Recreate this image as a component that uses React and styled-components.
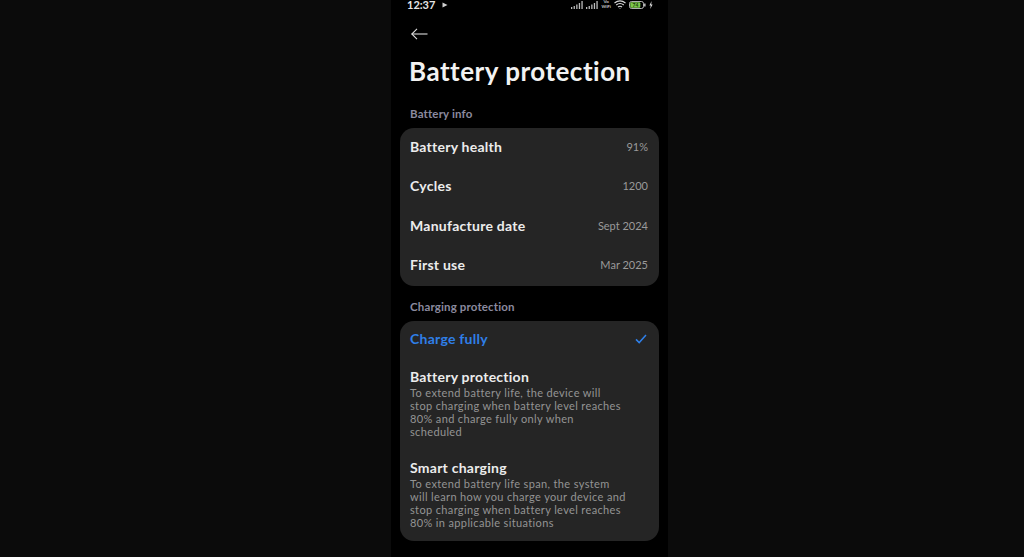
import React from 'react';
import styled, { createGlobalStyle } from 'styled-components';

const Global = createGlobalStyle`
  html, body { margin: 0; padding: 0; background: #0b0b0b; }
  body { width: 1024px; height: 557px; overflow: hidden; }
`;

const Page = styled.div`
  width: 1024px;
  height: 557px;
  box-sizing: border-box;
  padding-left: 391px;
  display: flex;
  background: #0b0b0b;
  font-family: Lato, "Noto Sans", sans-serif;
`;

const Phone = styled.div`
  width: 277px;
  height: 557px;
  background: #000;
  box-sizing: border-box;
  padding: 0 9px;
  display: flex;
  flex-direction: column;
  overflow: hidden;
`;

const StatusBar = styled.div`
  height: 9px;
  margin: 0 6px 0 7px;
  display: flex;
  align-items: center;
  justify-content: space-between;
  color: #e6e6e6;
`;

const StatusLeft = styled.div`
  display: flex;
  align-items: center;
  gap: 7px;
`;

const StatusTime = styled.div`
  height: 9px;
  font-size: 11px;
  line-height: 9px;
  font-weight: 700;
`;

const StatusRight = styled.div`
  display: flex;
  align-items: center;
  gap: 3px;
`;

const WifiLabel = styled.span`
  font-size: 4.5px;
  line-height: 4.5px;
  font-weight: 700;
  text-align: center;
  color: #ccc;
`;

const BackRow = styled.div`
  height: 24px;
  margin-top: 13px;
  padding-left: 11px;
  display: flex;
  align-items: center;
`;

const Title = styled.h1`
  margin: 8px 0 0 9px;
  font-size: 26px;
  line-height: 34px;
  font-weight: 700;
  letter-spacing: 0.5px;
  color: #f2f2f2;
`;

const SectionLabel = styled.div`
  margin: ${(p) => p.$top}px 0 0 10px;
  height: 16px;
  line-height: 16px;
  font-size: 11.5px;
  font-weight: 700;
  letter-spacing: 0.15px;
  color: #8b8a9f;
`;

const Card = styled.div`
  margin: 6px 0 0 0;
  background: #252525;
  border-radius: 14px;
  padding: ${(p) => p.$padding};
  display: flex;
  flex-direction: column;
`;

const InfoRow = styled.div`
  height: 39.5px;
  box-sizing: border-box;
  padding: 0 11px 3px 10px;
  display: flex;
  align-items: center;
  justify-content: space-between;
`;

const RowName = styled.span`
  font-size: 14px;
  font-weight: 700;
  letter-spacing: 0.25px;
  color: ${(p) => (p.$active ? '#2f7fe8' : '#ececec')};
`;

const RowValue = styled.span`
  font-size: 11px;
  color: #9a9a9a;
`;

const OptionRow = styled.div`
  height: ${(p) => p.$height}px;
  box-sizing: border-box;
  padding: 0 12px 3px 10px;
  display: flex;
  align-items: center;
  justify-content: space-between;
`;

const OptionBlock = styled.div`
  padding: 0 10px;
  margin-top: ${(p) => p.$top}px;
`;

const OptionTitle = styled.div`
  font-size: 14px;
  line-height: 19px;
  font-weight: 700;
  letter-spacing: 0.25px;
  color: #ececec;
`;

const OptionText = styled.div`
  font-size: 11px;
  line-height: 13px;
  letter-spacing: 0.36px;
  color: #949494;
  white-space: pre-line;
`;

const BatteryLevel = styled.text`
  font-size: 5px;
  font-weight: 700;
  fill: #1c3a10;
`;

const Signal = () => (
  <svg width="12" height="8" viewBox="0 0 12 8" fill="#bbb">
    <rect x="0" y="6" width="1.3" height="2" />
    <rect x="2.6" y="5" width="1.3" height="3" />
    <rect x="5.2" y="3.5" width="1.3" height="4.5" />
    <rect x="7.8" y="2" width="1.3" height="6" />
    <rect x="10.4" y="0" width="1.3" height="8" />
  </svg>
);

const Wifi = () => (
  <svg width="12" height="9" viewBox="0 0 12 9" fill="none" stroke="#ddd" strokeWidth="1.1">
    <path d="M0.5 3 Q6 -1.2 11.5 3" />
    <path d="M2.2 5 Q6 2 9.8 5" />
    <path d="M4 7 Q6 5.4 8 7" />
    <circle cx="6" cy="8.2" r="0.5" fill="#ddd" stroke="none" />
  </svg>
);

const Battery = () => (
  <svg width="17" height="8" viewBox="0 0 17 8">
    <rect x="0.5" y="0.5" width="14" height="7" rx="2" fill="none" stroke="#ddd" strokeWidth="0.8" />
    <rect x="1.3" y="1.3" width="10" height="5.4" rx="1" fill="#7cc84a" />
    <BatteryLevel x="3.6" y="5.9">74</BatteryLevel>
    <rect x="15.2" y="2.5" width="1.3" height="3" fill="#ddd" />
  </svg>
);

const Bolt = () => (
  <svg width="4" height="8" viewBox="0 0 4 8" fill="#ddd">
    <path d="M2.6 0 L0.4 4.4 H1.8 L1.2 8 L3.6 3.4 H2.2 Z" />
  </svg>
);

const Play = () => (
  <svg width="6" height="6" viewBox="0 0 6 6" fill="#cfcfcf">
    <path d="M0.5 0.5 L5.5 3 L0.5 5.5 Z" />
  </svg>
);

const BackArrow = () => (
  <svg width="17" height="12" viewBox="0 0 17 12" fill="none" stroke="#dcdcdc" strokeWidth="1.1">
    <path d="M16.5 6 H0.8" />
    <path d="M6 0.8 L0.8 6 L6 11.2" />
  </svg>
);

const Check = () => (
  <svg width="12" height="10" viewBox="0 0 12 10" fill="none" stroke="#2f7fe8" strokeWidth="1.5">
    <path d="M1 5.4 L4.2 8.6 L11 1" />
  </svg>
);

const info = [
  ['Battery health', '91%'],
  ['Cycles', '1200'],
  ['Manufacture date', 'Sept 2024'],
  ['First use', 'Mar 2025'],
];

export default function App() {
  return (
    <Page>
      <Global />
      <Phone>
        <StatusBar>
          <StatusLeft>
            <StatusTime>12:37</StatusTime>
            <Play />
          </StatusLeft>
          <StatusRight>
            <Signal />
            <Signal />
            <WifiLabel>Vo<br />WiFi</WifiLabel>
            <Wifi />
            <Battery />
            <Bolt />
          </StatusRight>
        </StatusBar>
        <BackRow><BackArrow /></BackRow>
        <Title>Battery protection</Title>
        <SectionLabel $top={18}>Battery info</SectionLabel>
        <Card $padding="0">
          {info.map(([name, value]) => (
            <InfoRow key={name}>
              <RowName>{name}</RowName>
              <RowValue>{value}</RowValue>
            </InfoRow>
          ))}
        </Card>
        <SectionLabel $top={13}>Charging protection</SectionLabel>
        <Card $padding="0 0 12px">
          <OptionRow $height={38}>
            <RowName $active>Charge fully</RowName>
            <Check />
          </OptionRow>
          <OptionBlock $top={8}>
            <OptionTitle>Battery protection</OptionTitle>
            <OptionText>{'To extend battery life, the device will\nstop charging when battery level reaches\n80% and charge fully only when\nscheduled'}</OptionText>
          </OptionBlock>
          <OptionBlock $top={20}>
            <OptionTitle>Smart charging</OptionTitle>
            <OptionText>{'To extend battery life span, the system\nwill learn how you charge your device and\nstop charging when battery level reaches\n80% in applicable situations'}</OptionText>
          </OptionBlock>
        </Card>
      </Phone>
    </Page>
  );
}
